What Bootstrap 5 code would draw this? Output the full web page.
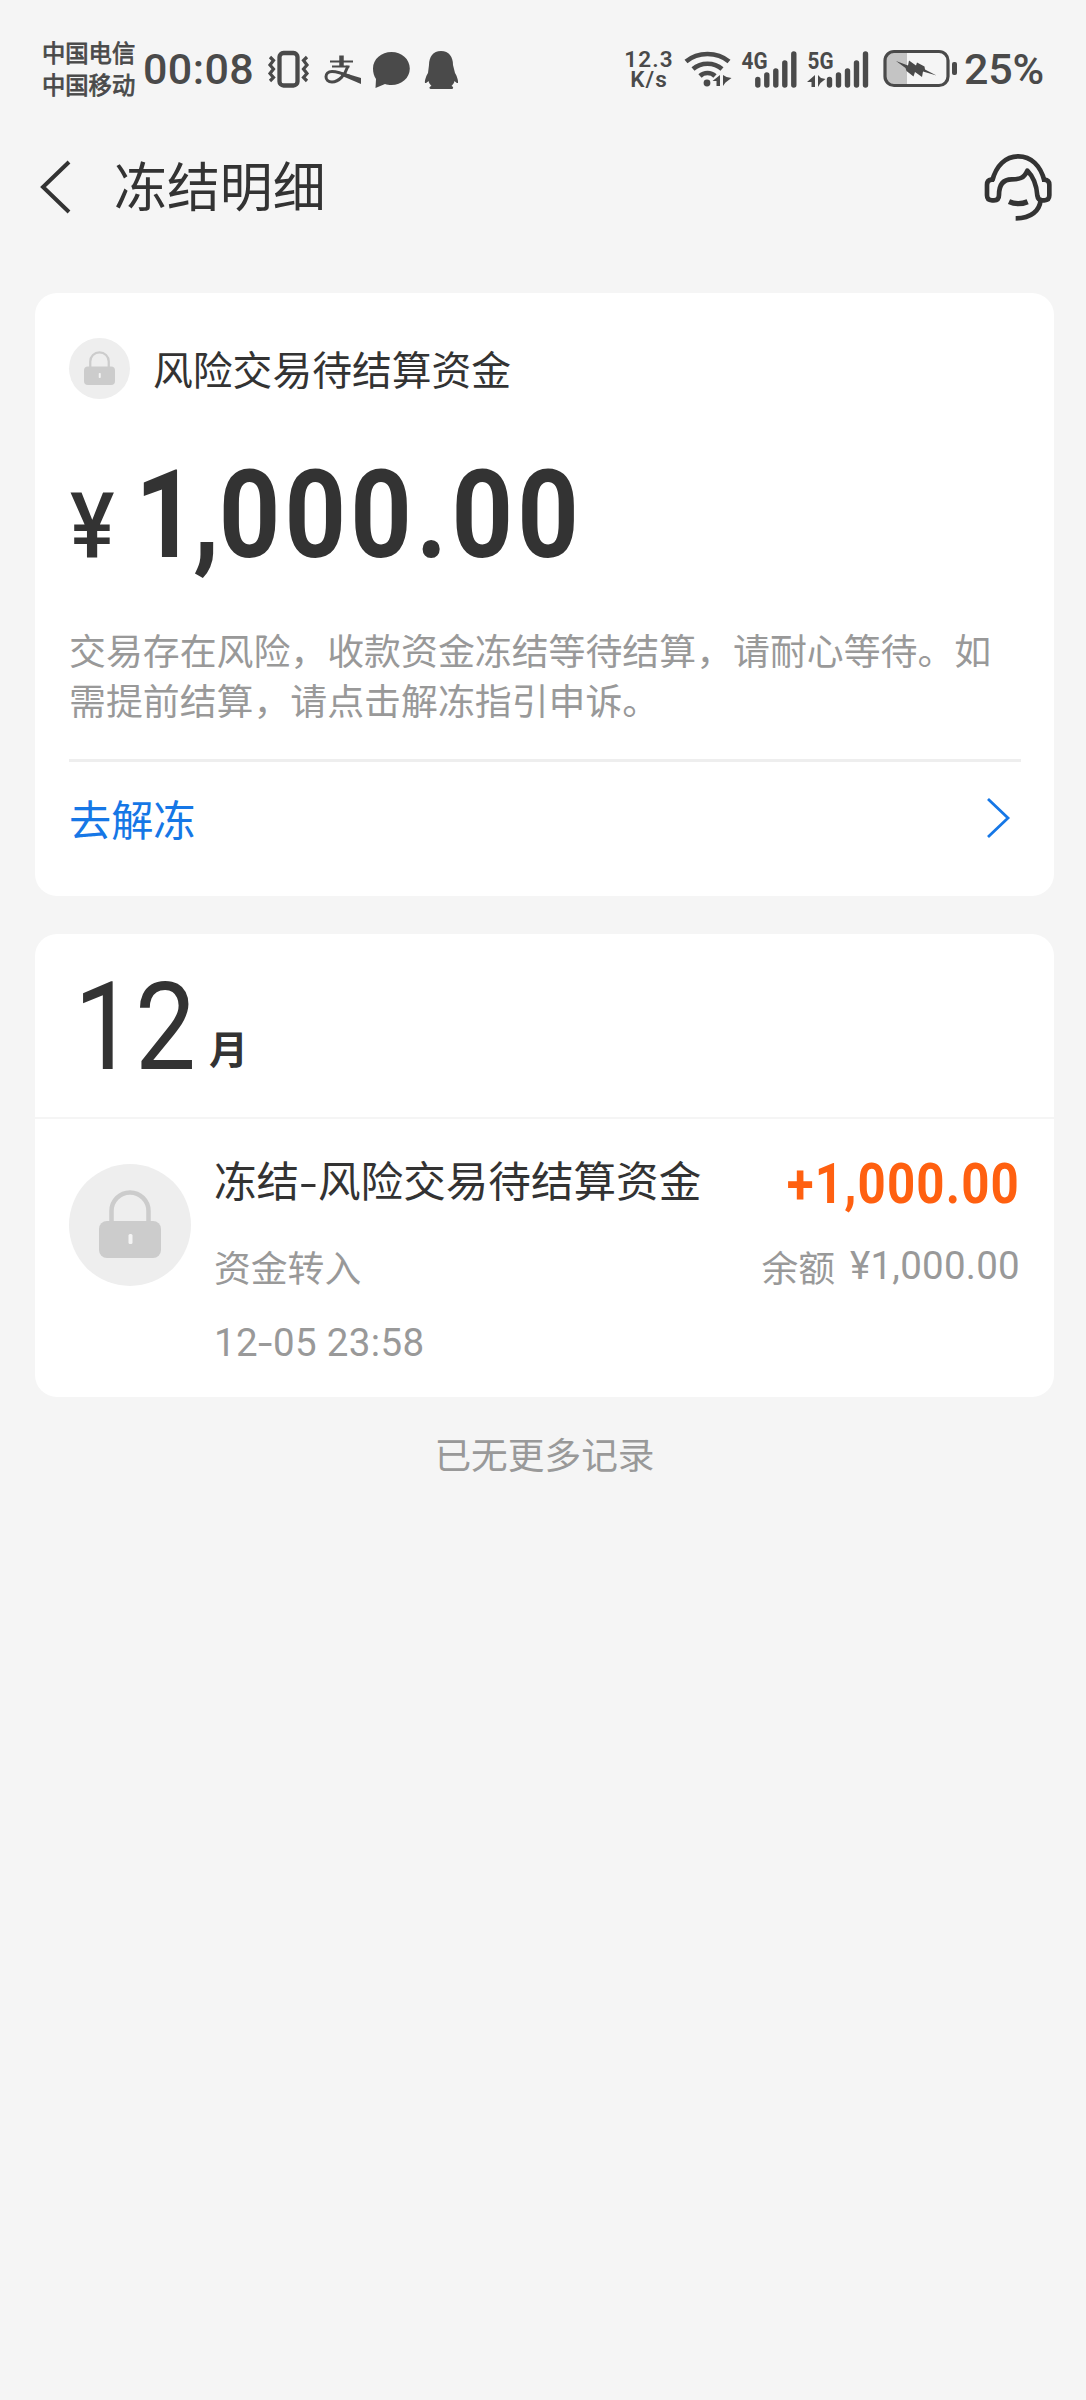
<!DOCTYPE html>
<html lang="zh-CN">
<head>
<meta charset="utf-8">
<meta name="viewport" content="width=device-width, initial-scale=1">
<title>冻结明细</title>
<link href="https://cdn.jsdelivr.net/npm/bootstrap@5.3.0/dist/css/bootstrap.min.css" rel="stylesheet">
<style>
body{background:#f5f5f5;color:#333;font-family:"Noto Sans CJK SC",sans-serif;min-height:2400px}
svg{display:block;flex:none;overflow:visible}
.num{font-family:Roboto,"Noto Sans CJK SC",sans-serif;display:inline-block;white-space:nowrap}
.statusbar{height:130px;padding:0 42px 0 42px;color:#4a4a4a}
.statusbar svg{color:#4a4a4a}
.carrier{font-size:23.3px;line-height:32px;-webkit-text-stroke:.8px #4a4a4a;width:94px;margin-top:36px;white-space:nowrap}
.clock{font-size:43px;line-height:50px;font-weight:500;margin:44px 0 0 7px;width:110px;letter-spacing:.4px}
.speed{width:50px;margin-top:49px;font-size:22.5px;line-height:20px;font-weight:600;text-align:center;letter-spacing:1.2px}
.speed div+div{letter-spacing:1px}
.battery-text{font-size:43px;line-height:50px;font-weight:500;margin:44px 0 0 6px;letter-spacing:-.2px}
.topbar{height:115px;padding:0 34px 0 40px}
.topbar h1{font-size:52.9px;line-height:60px;font-weight:400;margin:0 0 7px 42px}
.panel{background:#fff;border:0;border-radius:22px;margin:0 32px 0 35px}
.hold-name{font-size:39.8px;line-height:60px;margin:0 0 2px 23px}
.big-sum{height:120px;line-height:120px;margin-top:57px}
.big-sum .yen{font-size:91px;font-weight:500;transform:scaleX(.92);transform-origin:left;width:65px;margin-left:1px}
.big-sum .val{font-size:122px;font-weight:700;transform:scaleX(.88);transform-origin:left;letter-spacing:4.8px}
.big-sum .one{letter-spacing:-4px}
.big-sum .comma{letter-spacing:-1px}
.hint{font-size:36.9px;line-height:50px;color:#999;margin:48px -20px 0 0}
.rule{height:3px;background:#eee;margin-top:35px}
.unfreeze{height:112px;font-size:42.2px;color:#1677e6;text-decoration:none;padding-right:11px}
.month{height:183px;line-height:187px;padding-left:39px}
.month .val{font-size:122px;transform:scaleX(.89);transform-origin:left;width:135px}
.month .unit{font-size:39px;font-weight:700;line-height:50px;transform:translateY(-5px)}
.entry{border-top:2px solid #f5f5f5;padding:35px 34px 29px 34px}
.entry .ttl{font-size:42.6px;line-height:50px;color:#333;white-space:nowrap}
.entry .ttl .hy{display:inline-block;transform:scaleX(1.3);margin:0 2px}
.entry .dim{font-size:36.8px;line-height:50px;color:#999;white-space:nowrap}
.entry .date{font-size:38.5px;line-height:50px;color:#999;margin-top:27px;letter-spacing:.35px}
.entry .date .hy{display:inline-block;transform:scaleX(1.35);margin:0 2px}
.entry .bal{font-size:38.5px;letter-spacing:.25px;margin-left:15px}
.plus{font-size:56px;line-height:50px;font-weight:700;color:#ff6010;transform:scaleX(.88);transform-origin:right;letter-spacing:1.3px}
.footer-note{font-size:36.7px;line-height:50px;color:#999;margin:31px 0 0 3px}
</style>
</head>
<body>
<header class="statusbar d-flex align-items-start">
  <div class="carrier">中国电信<br>中国移动</div>
  <div class="num clock">00:08</div>
  <svg width="43" height="38" viewBox="267 50 43 38" style="margin:50px 0 0 14px" fill="none" stroke="currentColor">
    <rect x="279.500" y="53" width="18" height="32.500" rx="4" stroke-width="4.300"/>
    <path d="M270 57l3.500 3.500-3.500 4.500 3.500 4-3.500 4.500 3.500 4-3.500 3.500M307 57l-3.500 3.500 3.500 4.500-3.500 4 3.500 4.500-3.500 4 3.500 3.500" stroke-width="3.200"/>
  </svg>
  <svg width="38" height="30" viewBox="324 55 38 30" style="margin:55px 0 0 14px" fill="none" stroke="currentColor">
    <path d="M330 61.500h23M332 66.500h17.500" stroke-width="2.200"/><path d="M341.500 55.500v11" stroke-width="4.500"/>
    <path d="M348 66c-3 9-9 16-16 16-8 0-8-10.500 0-10.500 6 0 12 2.500 18 5" stroke-width="3"/><path d="M341 72l20 6v6l-20-8.500z" fill="currentColor" stroke="none"/>
  </svg>
  <svg width="38" height="37" viewBox="373 51 38 37" style="margin:51px 0 0 11px" fill="currentColor"><path d="M391.500 52c10 0 18.300 7 18.300 16.500S401.500 85 391.500 85c-2.500 0-4.500-.3-6.500-1l-9.500 4 .5-9c-2-3-3-6.500-3-10.500 0-9.500 8.500-16.500 18.500-16.500z"/></svg>
  <svg width="34" height="39" viewBox="424 50 34 39" style="margin:50px 0 0 13px" fill="currentColor"><path d="M441 51c8 0 12 6 12 14l2 8c2 3 3.500 8 3 10-1 .5-2.500-1-3.500-2-.5 2-1.500 3.500-3 5 2 .5 2.500 3 0 3h-20c-3 0-2.500-2.500 0-3-1.500-1.500-2.500-3-3-5-1 1-2.500 2.500-3.500 2-.5-2 1-7 3-10l1-8c0-8 4-14 12-14z"/></svg>

  <div class="ms-auto num speed"><div>12.3</div><div>K/s</div></div>
  <svg width="48" height="38" viewBox="685 50 48 38" style="margin:50px 0 0 10px" fill="none" stroke="currentColor">
    <path d="M687 61.500c12-10 31-10 43 0M694 69c8-7 21-7 29 0M701 76c4-4 11-4 15 0" stroke-width="4.600"/>
    <circle cx="708" cy="83" r="3.400" fill="currentColor" stroke="none"/>
    <path d="M721 75v11h-3.500v-5h-4zM724 75v11l2.500-3.500 6-4.500-5-1z" fill="currentColor" stroke="none"/>
  </svg>
  <svg width="56" height="38" viewBox="742 50 56 38" style="margin:50px 0 0 9px" fill="none" stroke="currentColor" stroke-width="5.400" stroke-linecap="round">
    <text x="742.500" y="68.800" textLength="26" lengthAdjust="spacingAndGlyphs" font-family="Roboto" font-weight="700" font-size="23.500" fill="currentColor" stroke="none">4G</text>
    <path d="M758.800 79.500v5.500M767.800 75v10M776.800 71v14M785.800 63v22M794.800 54v31"/>
  </svg>
  <svg width="62" height="38" viewBox="808 50 62 38" style="margin:50px 0 0 10px" fill="none" stroke="currentColor" stroke-width="5.400" stroke-linecap="round">
    <text x="808.500" y="68.800" textLength="26" lengthAdjust="spacingAndGlyphs" font-family="Roboto" font-weight="700" font-size="23.500" fill="currentColor" stroke="none">5G</text>
    <path d="M830.500 79.500v5.500M839.500 75v10M848.500 71v14M857.500 63v22M866.500 54v31"/>
    <path d="M816 75v12h-3.500v-5h-4.500zM819 75v12l2.500-4 5-4-4.500-1z" fill="currentColor" stroke="none"/>
  </svg>
  <svg width="75" height="38" viewBox="884 50 75 38" style="margin:50px 0 0 14px">
    <path d="M894 52h14v33h-14q-8-1-8-9V61q0-8 8-9z" fill="#c4c4c4"/>
    <rect x="886" y="51.500" width="63" height="34" rx="9" fill="none" stroke="currentColor" stroke-width="3.200"/>
    <rect x="953" y="62" width="5" height="13" rx="2" fill="currentColor"/>
    <path d="M897 61l12 4.500 1-5 7 5 1-3 7.500 4 .5 3 11.500 6-13.500-4-1 5.500-7-5-1.500 4.500-7-5.500-1-3z" fill="currentColor"/>
  </svg>
  <div class="num battery-text">25%</div>
</header>

<nav class="topbar d-flex align-items-center">
  <svg width="32" height="54" viewBox="0 0 32 54" fill="none" stroke="#333" stroke-width="4" style="margin-bottom:2px"><path d="M29 2L3 27l26 25"/></svg>
  <h1>冻结明细</h1>
  <svg class="ms-auto" width="68" height="70" viewBox="72 42 204 210" fill="none" stroke="#333" stroke-width="14" stroke-linejoin="round">
    <path d="M97 125C108 80 137 52 175 52s67 28 78 73"/>
    <path d="M102 122H94Q81 124 81 137v32q0 15 15 15h6q15 0 15-16c0-30 12-47 38-47 22 0 36-2 47-26 20 20 28 45 30 75q2 14 15 14h6q15 0 15-15v-32q0-13-15-15h-7"/>
    <path d="M242 182c-3 33-28 56-75 56"/><path d="M147 188q27 12 56 0" stroke-width="16"/>
  </svg>
</nav>

<main style="padding-top:48px">
  <section class="card panel">
    <div class="d-flex flex-column" style="padding:45px 33px 22px 34px">
      <div class="d-flex align-items-center" style="height:61px">
        <svg width="61" height="61" viewBox="0 0 122 122"><use href="#lock"/></svg>
        <span class="hold-name">风险交易待结算资金</span>
      </div>
      <div class="big-sum d-flex align-items-baseline"><span class="num yen">¥</span><span class="num val"><span class="one">1</span><span class="comma">,</span>000.00</span></div>
      <p class="hint">交易存在风险，收款资金冻结等待结算，请耐心等待。如<br>需提前结算，请点击解冻指引申诉。</p>
      <div class="rule"></div>
      <a class="unfreeze d-flex align-items-center justify-content-between" href="#">去解冻
        <svg width="23" height="40" viewBox="0 0 23 40" fill="none" stroke="currentColor" stroke-width="2.800"><path d="M1 1l20 19L1 39"/></svg>
      </a>
    </div>
  </section>

  <section class="card panel" style="margin-top:38px">
    <div class="month d-flex align-items-baseline"><span class="num val">12</span><span class="unit">月</span></div>
    <div class="entry d-flex">
      <svg width="122" height="122" viewBox="0 0 122 122" style="margin-top:10px">
        <g id="lock"><circle cx="61" cy="61" r="61" fill="#eee"/><path d="M42.500 60V47a18.500 18.500 0 0 1 37 0v13" fill="none" stroke="#ccc" stroke-width="4.500"/><rect x="30" y="57" width="62" height="37" rx="8" fill="#ccc"/><rect x="59.500" y="70" width="4" height="10" rx="1.500" fill="#f4f4f4"/></g>
      </svg>
      <div class="flex-grow-1" style="margin-left:23px">
        <div class="ttl">冻结<span class="hy">-</span>风险交易待结算资金</div>
        <div class="dim" style="margin-top:37px">资金转入</div>
        <div class="num date">12<span class="hy">-</span>05 23:58</div>
      </div>
      <div class="text-end d-flex flex-column align-items-end">
        <div class="num plus" style="margin-top:5px">+1,000.00</div>
        <div class="dim d-flex" style="margin-top:32px">余额<span class="num bal">¥1,000.00</span></div>
      </div>
    </div>
  </section>
  <p class="footer-note text-center">已无更多记录</p>
</main>
<script src="https://cdn.jsdelivr.net/npm/bootstrap@5.3.0/dist/js/bootstrap.bundle.min.js"></script>
</body>
</html>
